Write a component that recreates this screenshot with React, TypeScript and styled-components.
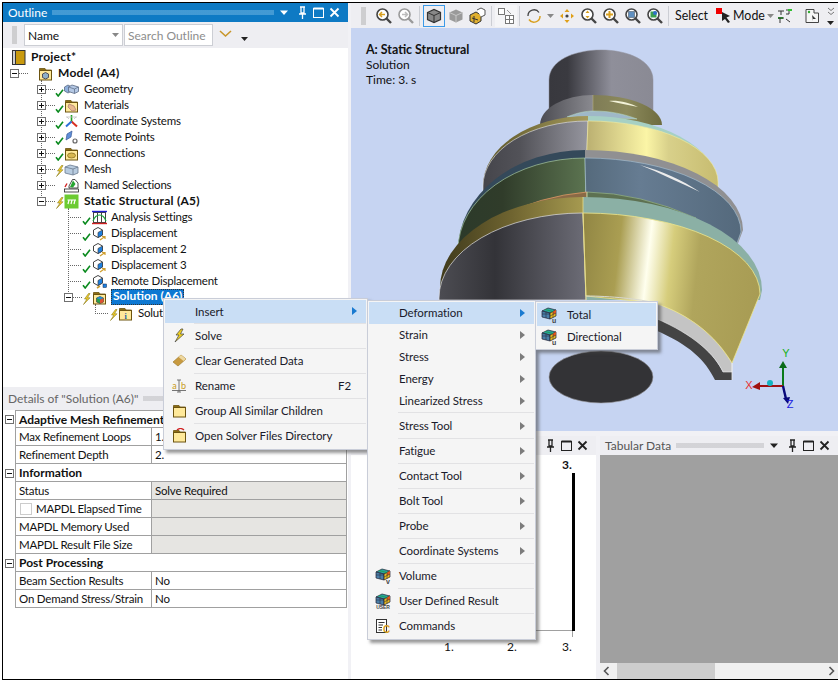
import React from "react";
import styled, { createGlobalStyle } from "styled-components";

const Global = createGlobalStyle`
  html, body { margin: 0; padding: 0; background: #fff; }
  #root { width: 840px; height: 682px; overflow: hidden; }
  * { box-sizing: border-box; }
`;

const FONT = `Lato, Roboto, "Liberation Sans", sans-serif`;

const Frame = styled.div`
  position: relative;
  margin: 2px 0 0 2px;
  width: 836px;
  height: 678px;
  border: 1px solid #000;
  border-right: 0;
  background: #f1f1f5;
  display: flex;
  gap: 3px;
  font: 12px ${FONT};
  color: #111;
  overflow: hidden;
`;
const LeftCol = styled.div`
  width: 345px;
  display: flex;
  flex-direction: column;
  background: #fff;
`;
const RightCol = styled.div`
  flex: 1;
  display: flex;
  flex-direction: column;
  min-width: 0;
`;
const TitleBar = styled.div<{ $active?: boolean }>`
  height: 19px;
  flex: none;
  display: flex;
  align-items: center;
  gap: 5px;
  padding: 0 7px 0 5px;
  background: ${(p) => (p.$active ? "#0e7ac4" : "#eeeef2")};
  color: ${(p) => (p.$active ? "#fff" : "#555")};
  font-size: 12px;
`;
const TitleDots = styled.div<{ $active?: boolean }>`
  flex: 1;
  height: 5px;
  background-image: radial-gradient(circle at center, ${(p) => (p.$active ? "#7fbde6" : "#b4b4b8")} 0.6px, transparent 0.8px);
  background-size: 2px 2px;
`;
const PanelBtns = styled.div`
  display: flex;
  align-items: center;
  gap: 3px;
  flex: none;
`;
const DropTri = styled.span`
  margin-right: 4px;
  display: flex;
`;
const OutlineBar = styled.div`
  height: 26px;
  flex: none;
  background: #eeeef2;
  display: flex;
  align-items: center;
  padding-left: 9px;
`;
const Grip = styled.div`
  width: 5px;
  height: 18px;
  flex: none;
  background-image: radial-gradient(circle at center, #a8a8a8 0.6px, transparent 0.8px);
  background-size: 2px 2px;
`;
const Combo = styled.div<{ $w: number; $ml?: number; $muted?: boolean }>`
  width: ${(p) => p.$w}px;
  height: 22px;
  flex: none;
  background: #fff;
  border: 1px solid #ccced4;
  display: flex;
  align-items: center;
  padding: 0 3px;
  margin: 0 1px 0 ${(p) => p.$ml ?? 0}px;
  color: ${(p) => (p.$muted ? "#8d8d8d" : "#111")};
  justify-content: space-between;
`;
const Nudge = styled.span<{ $l: number; $t: number }>`
  margin-left: ${(p) => p.$l}px;
  margin-top: ${(p) => p.$t}px;
  display: flex;
`;
const Tree = styled.div`
  flex: 1;
  padding-top: 1px;
  background: #fff;
`;
const dotted = "repeating-linear-gradient(to bottom, #666 0 1px, transparent 1px 2px)";
type Guide = [number, "full" | "top" | "bottom"];
const guideBg = (g?: Guide[]) =>
  g && g.length
    ? `background-image: ${g.map(() => dotted).join(",")};
       background-repeat: no-repeat;
       background-size: ${g.map((x) => `1px ${x[1] === "full" ? 16 : x[1] === "top" ? 8 : 3}px`).join(",")};
       background-position: ${g.map((x) => `${x[0]}px ${x[1] === "bottom" ? 13 : 0}px`).join(",")};`
    : "";
const Row = styled.div<{ $pad: number; $guides?: Guide[] }>`
  height: 16px;
  display: flex;
  align-items: center;
  padding-left: ${(p) => p.$pad}px;
  ${(p) => guideBg(p.$guides)}
`;
const Expander = styled.div`
  width: 9px;
  height: 9px;
  flex: none;
  border: 1px solid #707070;
  background: #fff;
  position: relative;
  &::before {
    content: "";
    position: absolute;
    left: 1px;
    right: 1px;
    top: 3px;
    height: 1px;
    background: #111;
  }
`;
const PlusExpander = styled(Expander)`
  &::after {
    content: "";
    position: absolute;
    top: 1px;
    bottom: 1px;
    left: 3px;
    width: 1px;
    background: #111;
  }
`;
const HDots = styled.div<{ $w: number }>`
  width: ${(p) => p.$w}px;
  height: 1px;
  flex: none;
  background-image: repeating-linear-gradient(to right, #666 0 1px, transparent 1px 2px);
`;
const Slot = styled.div`
  width: 9px;
  height: 16px;
  flex: none;
  display: flex;
  align-items: center;
  justify-content: center;
`;
const IconSlot = styled.div<{ $ml?: number }>`
  width: 15px;
  height: 16px;
  flex: none;
  margin-left: ${(p) => p.$ml ?? 0}px;
  display: flex;
  align-items: center;
  justify-content: center;
`;
const Label = styled.span<{ $bold?: boolean; $ml?: number }>`
  margin-left: ${(p) => p.$ml ?? 5}px;
  padding-bottom: 2px;
  font-size: ${(p) => (p.$bold ? 12 : 11.5)}px;
  letter-spacing: ${(p) => (p.$bold ? 0.25 : -0.2)}px;
  font-weight: ${(p) => (p.$bold ? 700 : 400)};
  white-space: nowrap;
`;
const SelLabel = styled.span`
  margin-left: 4px;
  background: #0d78d2;
  color: #fff;
  outline: 1px dotted #333;
  outline-offset: -1px;
  height: 16px;
  line-height: 14px;
  padding: 0 2px;
  font-weight: 700;
  white-space: nowrap;
`;
const DetailsHeader = styled.div`
  height: 23px;
  flex: none;
  display: flex;
  align-items: center;
  gap: 5px;
  padding: 3px 7px 3px 5px;
  background: #eeeef2;
  color: #666;
`;
const DetailsBody = styled.div`
  height: 269px;
  flex: none;
  background: #fff;
  display: grid;
  grid-template-columns: 12px 137px 195px;
  grid-auto-rows: 18px;
  align-content: start;
`;
const ExpCell = styled.div`
  display: flex;
  align-items: center;
  justify-content: center;
`;
const Section = styled.div<{ $first?: boolean }>`
  grid-column: 2 / 4;
  border: 1px solid #a0a0a0;
  border-top-width: ${(p) => (p.$first ? 1 : 0)}px;
  font-weight: 700;
  padding-left: 3px;
  line-height: 17px;
  white-space: nowrap;
`;
const Cell = styled.div<{ $col: 2 | 3; $ro?: boolean }>`
  grid-column: ${(p) => p.$col};
  border-right: 1px solid #a0a0a0;
  border-bottom: 1px solid #a0a0a0;
  border-left: ${(p) => (p.$col === 2 ? "1px solid #a0a0a0" : "0")};
  background: ${(p) => (p.$ro ? "#e6e5e2" : "#fff")};
  padding-left: 3px;
  font-size: 11.5px;
  letter-spacing: -0.2px;
  line-height: 16px;
  white-space: nowrap;
  overflow: hidden;
  display: flex;
  align-items: center;
`;
const Check = styled.span`
  width: 12px;
  height: 12px;
  border: 1px solid #ccc;
  background: #fff;
  margin: 0 4px 0 1px;
  flex: none;
`;
const Toolbar = styled.div`
  height: 25px;
  flex: none;
  background: #eeeef2;
  display: flex;
  align-items: center;
  padding-left: 10px;
`;
const ToolBtn = styled.div<{ $w?: number; $ml?: number; $on?: boolean; $soft?: boolean }>`
  width: ${(p) => p.$w ?? 22}px;
  height: 22px;
  flex: none;
  margin-left: ${(p) => p.$ml ?? 0}px;
  display: flex;
  align-items: center;
  justify-content: center;
  border: ${(p) => (p.$on ? "1px solid #3c9ae8" : "0")};
  background: ${(p) => (p.$soft ? "#f5f5f7" : "transparent")};
`;
const ToolSep = styled.div<{ $l: number; $r: number }>`
  width: 1px;
  height: 20px;
  flex: none;
  margin: 0 ${(p) => p.$r}px 0 ${(p) => p.$l}px;
  background: #ccced4;
`;
const ToolText = styled.span<{ $ml?: number }>`
  font-size: 12.4px;
  margin-left: ${(p) => p.$ml ?? 0}px;
  white-space: nowrap;
`;
const OverflowStack = styled.span`
  margin-left: 4px;
  display: flex;
  flex-direction: column;
  align-items: center;
  gap: 5px;
`;
const Viewport = styled.div`
  position: relative;
  height: 403px;
  flex: none;
  background: #c6d4f2;
`;
const Scene = styled.svg`
  display: block;
  width: 100%;
  height: 100%;
`;
const Caption = styled.div`
  position: absolute;
  left: 15px;
  top: 14px;
  line-height: 15px;
  color: #111;
`;
const CaptionTitle = styled.div`
  font-weight: 700;
  font-size: 12.4px;
`;
const BottomRow = styled.div`
  flex: 1;
  margin-top: 5px;
  display: flex;
  gap: 4px;
  min-height: 0;
`;
const GraphPanel = styled.div`
  width: 245px;
  flex: none;
  display: flex;
  flex-direction: column;
  background: #fff;
`;
const GraphBody = styled.svg`
  flex: 1;
  display: block;
  width: 100%;
  min-height: 0;
`;
const TabularPanel = styled.div`
  flex: 1;
  display: flex;
  flex-direction: column;
  min-width: 0;
`;
const TabularBody = styled.div`
  flex: 1;
  background: #a0a0a0;
`;
const ScrollBar = styled.div`
  height: 16px;
  flex: none;
  background: #f0f0f0;
  display: flex;
  align-items: center;
  padding: 0 3px;
  justify-content: space-between;
`;
const Thumb = styled.div`
  width: 98px;
  height: 16px;
  background: #cdcdcd;
  margin-left: 7px;
  margin-right: auto;
`;
const Menu = styled.div<{ $x: number; $y: number; $w: number }>`
  position: absolute;
  left: ${(p) => p.$x}px;
  top: ${(p) => p.$y}px;
  width: ${(p) => p.$w}px;
  background: #f5f5f5;
  border: 1px solid #c9cdd8;
  box-shadow: 3px 3px 3px rgba(70, 70, 70, 0.55);
  padding: 1px;
  font-size: 11.5px;
  letter-spacing: -0.05px;
  color: #1a1a2a;
`;
const MenuItem = styled.div<{ $h: number; $sep?: boolean; $on?: boolean; $tx: number; $pt?: number; $pb?: number }>`
  position: relative;
  height: ${(p) => p.$h}px;
  display: flex;
  align-items: center;
  padding: ${(p) => p.$pt ?? 0}px 9px ${(p) => p.$pb ?? 0}px ${(p) => p.$tx}px;
  background: ${(p) => (p.$on ? "#c9def5" : "transparent")};
  &::before {
    content: ${(p) => (p.$sep ? '""' : "none")};
    position: absolute;
    left: ${(p) => p.$tx - 1}px;
    right: 0;
    top: 0;
    height: 1px;
    background: #e2e2e4;
  }
`;
const MenuIcon = styled.span<{ $l?: number }>`
  position: absolute;
  left: ${(p) => p.$l ?? 3}px;
  top: 0;
  bottom: 0;
  width: 22px;
  display: flex;
  align-items: center;
  justify-content: center;
`;
const Shortcut = styled.span`
  margin-left: auto;
  margin-right: 6px;
`;
const Arrow = styled.span<{ $on?: boolean }>`
  margin-left: auto;
  width: 0;
  height: 0;
  border-left: 5px solid ${(p) => (p.$on ? "#1a7ad0" : "#7c7c7c")};
  border-top: 4px solid transparent;
  border-bottom: 4px solid transparent;
`;

/* ---------- icons ---------- */
const S = (p: { w?: number; h?: number; children: React.ReactNode }) => (
  <svg width={p.w ?? 15} height={p.h ?? 15} viewBox={`0 0 ${p.w ?? 15} ${p.h ?? 15}`} style={{ display: "block", flex: "none" }}>
    {p.children}
  </svg>
);
const CheckMark = () => (
  <S w={9} h={16}>
    <path d="M1 12.3L3.2 15L8 8.8" fill="none" stroke="#0a8a1e" strokeWidth="1.6" />
  </S>
);
const Bolt = () => (
  <S w={9} h={16}>
    <path d="M6.5 4.5L2.5 10H5L1.5 15.5L8 8.8H5.5L8 4.5Z" fill="#f2cf2a" stroke="#8a7a1c" strokeWidth="0.6" />
  </S>
);
const FolderBase = (p: { children?: React.ReactNode }) => (
  <S>
    <path d="M1.5 2.5H7L8 4H13.5V5H1.5Z" fill="#8c6d14" stroke="#6c5410" strokeWidth="0.8" />
    <rect x="1.5" y="4.5" width="12" height="9.5" fill="#ffe99a" stroke="#6c5410" />
    {p.children}
  </S>
);
const BoxCluster = () => (
  <S>
    <path d="M0.5 5L4 3L7.5 5V9L4 11L0.5 9Z" fill="#8fb0dc" stroke="#5a6a84" strokeWidth="0.8" />
    <path d="M4.5 5L8 3L14.5 5V9.5L10.5 11.5L4.5 9.5Z" fill="#b4c8e4" stroke="#5a6a84" strokeWidth="0.8" />
    <path d="M4.5 5L10.5 7V11.5M10.5 7L14.5 5" fill="none" stroke="#5a6a84" strokeWidth="0.7" />
  </S>
);
const ProjectIcon = () => (
  <S>
    <rect x="1.5" y="0.5" width="3" height="14" fill="#cfcfcf" stroke="#333" />
    <rect x="4.5" y="0.5" width="9.5" height="14" fill="#c99a0e" stroke="#333" />
  </S>
);
const ModelIcon = () => (
  <FolderBase>
    <path d="M4.5 8L7.5 6.5L10.5 8V11.5L7.5 13L4.5 11.5Z" fill="#8fb0c8" stroke="#334" strokeWidth="0.8" />
  </FolderBase>
);
const MaterialsIcon = () => (
  <FolderBase>
    <path d="M5 6L10 8L12 12L8 13L4 9Z" fill="#e8b98e" stroke="#a77" strokeWidth="0.7" />
  </FolderBase>
);
const ConnectionsIcon = () => (
  <FolderBase>
    <ellipse cx="7.5" cy="9.5" rx="4" ry="2.5" fill="#d8b850" stroke="#8a6e20" strokeWidth="0.8" />
  </FolderBase>
);
const CoordIcon = () => (
  <S>
    <path d="M7.5 7.5V1" stroke="#1da01d" strokeWidth="1.6" />
    <path d="M7.5 7.5L13 12.5" stroke="#d83020" strokeWidth="2" />
    <path d="M7.5 7.5L2 12.5" stroke="#2d6fd8" strokeWidth="2" />
    <path d="M2 3L13 3M5 5L3 3M10 5L12 3" stroke="#c0c0c0" strokeWidth="0.8" />
  </S>
);
const RemoteIcon = () => (
  <S>
    <path d="M2 10L3 4L8 1L7 7Z" fill="#5f8fd8" stroke="#3a5a9a" strokeWidth="0.7" />
    <circle cx="11" cy="11" r="2" fill="none" stroke="#666" strokeWidth="1.2" />
  </S>
);
const MeshIcon = () => (
  <S>
    <path d="M1 5L6 3L14 5V11L9 13L1 11Z" fill="#b8cce0" stroke="#6a7a8e" strokeWidth="0.8" />
    <path d="M1 5L9 7V13M9 7L14 5" fill="none" stroke="#6a7a8e" strokeWidth="0.8" />
  </S>
);
const NamedIcon = () => (
  <S>
    <rect x="0.5" y="11" width="14" height="3" fill="#fff" stroke="#222" strokeWidth="0.8" />
    <path d="M5 8L8.5 1.5H11L14 5V10H5Z" fill="#fff" stroke="#222" strokeWidth="0.8" />
    <path d="M6 9L9 2.5L11.5 6L9 9.5Z" fill="#27a531" />
    <path d="M1 9L3 5.5" stroke="#d02020" strokeWidth="1.4" />
  </S>
);
const StaticIcon = () => (
  <S>
    <rect x="0.5" y="0.5" width="14" height="14" fill="#6ccb32" />
    <path d="M3.5 6H12M5 6L4 10M8 6L7 10M11 6L10 10" stroke="#fff" strokeWidth="1.2" fill="none" />
  </S>
);
const AnalysisIcon = () => (
  <S>
    <rect x="1.5" y="2.5" width="12" height="10" fill="#fff" stroke="#444" />
    <path d="M5.5 2.5V12.5M9.5 2.5V12.5" stroke="#444" />
    <path d="M0 1.5H15" stroke="#2020d0" strokeWidth="1.4" />
    <path d="M0 13.5H15" stroke="#d02020" strokeWidth="1.4" />
    <path d="M1 11C4 3 11 3 14 11" fill="none" stroke="#15a83a" strokeWidth="1.2" />
  </S>
);
const DispIcon = (p: { remote?: boolean }) => (
  <S>
    <path d="M1.5 4L6 1.5L10.5 4V9L6 11.5L1.5 9Z" fill="#fff" stroke="#444" />
    <path d="M6 6.5L10.5 4V9L6 11.5Z" fill="#1b7fe0" stroke="#444" strokeWidth="0.7" />
    {p.remote ? (
      <>
        <rect x="11" y="10" width="3.5" height="3.5" fill="#1b7fe0" stroke="#124" strokeWidth="0.5" />
        <path d="M5 14L8 12" stroke="#c99a2e" strokeWidth="1.6" />
      </>
    ) : (
      <path d="M8 14L13 10.5M10 10.5H13V13" stroke="#cf9f30" strokeWidth="1.2" fill="none" />
    )}
  </S>
);
const SolutionIcon = () => (
  <FolderBase>
    <path d="M4.5 8L8 6.5L11.5 8V12L8 13.5L4.5 12Z" fill="#28a048" stroke="#334" strokeWidth="0.6" />
    <path d="M8 9.5L11.5 8V12L8 13.5Z" fill="#e05030" />
    <path d="M4.5 8L8 6.5L11.5 8L8 9.5Z" fill="#2a8ad0" />
  </FolderBase>
);
const InfoIcon = () => (
  <FolderBase>
    <text x="7.5" y="12.5" fontSize="8" textAnchor="middle" fill="#2060a0" fontWeight="700" fontFamily="Liberation Serif">i</text>
  </FolderBase>
);
const ChevronGold = () => (
  <S w={13} h={8}>
    <path d="M1 1L6.5 6L12 1" fill="none" stroke="#c8962a" strokeWidth="1.6" />
  </S>
);
const Tri = (p: { c?: string; w?: number; h?: number }) => (
  <S w={p.w ?? 7} h={p.h ?? 4}>
    <path d={`M0 0H${p.w ?? 7}L${(p.w ?? 7) / 2} ${p.h ?? 4}Z`} fill={p.c ?? "#222"} />
  </S>
);
const PanelTools = (p: { c: string }) => (
  <PanelBtns>
    <DropTri><S w={10} h={6}><path d="M1 0.5H9L5 5Z" fill={p.c} /></S></DropTri>
    <S w={13} h={14}>
      <path d="M4 1H9M5 1.5V7H8V1.5M3 8H10M6.5 8V13" fill="none" stroke={p.c} strokeWidth="1.3" />
    </S>
    <S w={13} h={13}>
      <rect x="1.5" y="2.5" width="10" height="9" fill="none" stroke={p.c} />
      <path d="M1.5 2.5H11.5" stroke={p.c} strokeWidth="2" />
    </S>
    <S w={13} h={13}>
      <path d="M2.5 2.5L10.5 10.5M10.5 2.5L2.5 10.5" stroke={p.c} strokeWidth="1.8" />
    </S>
  </PanelBtns>
);
const Mag = (p: { glyph?: React.ReactNode; muted?: boolean }) => (
  <S w={18} h={18}>
    <circle cx="7.5" cy="7.5" r="5.5" fill="#fff" stroke={p.muted ? "#9a9a9a" : "#444"} strokeWidth="1.6" />
    <path d="M11.5 11.5L16 16" stroke={p.muted ? "#9a9a9a" : "#444"} strokeWidth="2.4" />
    {p.glyph}
  </S>
);
const CubeTool = (p: { fill?: string; flat?: boolean }) => (
  <S w={16} h={16}>
    <path d="M1.5 4.5L8 1.5L14.5 4.5V11.5L8 14.5L1.5 11.5Z" fill={p.fill ?? "#888"} stroke={p.flat ? "none" : "#333"} strokeWidth="1.2" />
    <path d="M1.5 4.5L8 7.5L14.5 4.5" fill="none" stroke={p.flat ? "#c8c8c8" : "#333"} strokeWidth="1" />
    <path d="M8 7.5V14.5" stroke={p.flat ? "#c8c8c8" : "#333"} strokeWidth="1" />
  </S>
);
const RainbowCube = (p: { sub?: string; subSize?: number; subX?: number }) => (
  <S w={17} h={16}>
    <path d="M1 4L7 1L15 3L9 6Z" fill="#2aa6a0" stroke="#223" strokeWidth="0.7" />
    <path d="M1 4L9 6V12L1 10Z" fill="#4a7fa8" stroke="#223" strokeWidth="0.7" />
    <path d="M9 6L15 3V9L9 12Z" fill="#e8bc20" stroke="#223" strokeWidth="0.7" />
    <path d="M12 4.5L15 3V6L12 7.5Z" fill="#e2571f" />
    <path d="M1 7H9M5 5V11M9 9L15 6M12 4.5V10.5" fill="none" stroke="#223" strokeWidth="0.5" />
    <path d="M4 2.5L12 4.5" stroke="#1a9a4a" strokeWidth="0.8" />
    {p.sub ? (
      <text x={p.subX ?? 13} y="15.5" fontSize={p.subSize ?? 7} textAnchor="middle" fontWeight="700" fill="#444" fontFamily="Liberation Sans">{p.sub}</text>
    ) : null}
  </S>
);

/* ---------- menus data ---------- */
const menu2: { t: string; h: number; pt?: number; pb?: number; sep?: boolean; arrow?: boolean; on?: boolean; icon?: React.ReactNode }[] = [
  { t: "Deformation", h: 22, pb: 1, arrow: true, on: true },
  { t: "Strain", h: 22, pb: 1, arrow: true },
  { t: "Stress", h: 22, pb: 1, arrow: true },
  { t: "Energy", h: 22, pb: 1, arrow: true },
  { t: "Linearized Stress", h: 22, pb: 1, arrow: true },
  { t: "Stress Tool", h: 26, pt: 1, sep: true, arrow: true },
  { t: "Fatigue", h: 25, sep: true, arrow: true },
  { t: "Contact Tool", h: 25, sep: true, arrow: true },
  { t: "Bolt Tool", h: 25, sep: true, arrow: true },
  { t: "Probe", h: 25, sep: true, arrow: true },
  { t: "Coordinate Systems", h: 25, sep: true, arrow: true },
  { t: "Volume", h: 25, sep: true, icon: <RainbowCube sub="v" /> },
  { t: "User Defined Result", h: 25, sep: true, icon: <RainbowCube sub="USER" subSize={5} subX={8} /> },
  {
    t: "Commands",
    h: 25,
    sep: true,
    icon: (
      <S w={16} h={16}>
        <rect x="1.5" y="1.5" width="10" height="13" fill="#fff" stroke="#333" />
        <path d="M3.5 4.5H9.5M3.5 7H8M3.5 9.5H7M3.5 12H7" stroke="#333" />
        <text x="11.5" y="15" fontSize="10" textAnchor="middle" fill="#d8a020" fontFamily="Liberation Sans" fontWeight="700">C</text>
      </S>
    ),
  },
];

const bolt = <Bolt />;
const chk = <CheckMark />;

/* quarter-ellipse pieces of a shoulder outline: left foot -> crown -> right foot */
const up = (xl: number, yl: number, xt: number, yt: number) => `A${xt - xl} ${yl - yt} 0 0 1 ${xt} ${yt}`;
const down = (xt: number, yt: number, xr: number, yr: number) => `A${xr - xt} ${yr - yt} 0 0 1 ${xr} ${yr}`;

const Scene3D = () => (
  <Scene viewBox="351 28 487 403">
    <defs>
      <linearGradient id="cyl" gradientUnits="userSpaceOnUse" x1="549" y1="0" x2="653" y2="0">
        <stop offset="0" stopColor="#38383e" /><stop offset="0.18" stopColor="#3a3a40" /><stop offset="0.6" stopColor="#8f8f9a" /><stop offset="1" stopColor="#8a8a94" />
      </linearGradient>
      <linearGradient id="neckL" gradientUnits="userSpaceOnUse" x1="540" y1="0" x2="593" y2="0">
        <stop offset="0" stopColor="#4c4c52" /><stop offset="1" stopColor="#8a8a90" />
      </linearGradient>
      <linearGradient id="neckR" gradientUnits="userSpaceOnUse" x1="593" y1="0" x2="660" y2="0">
        <stop offset="0" stopColor="#7f7c56" /><stop offset="0.5" stopColor="#8c8a5c" /><stop offset="1" stopColor="#6f6d40" />
      </linearGradient>
      <linearGradient id="l3L" gradientUnits="userSpaceOnUse" x1="483" y1="0" x2="588" y2="0">
        <stop offset="0" stopColor="#45454b" /><stop offset="0.35" stopColor="#525258" /><stop offset="1" stopColor="#96969f" />
      </linearGradient>
      <linearGradient id="l3R" gradientUnits="userSpaceOnUse" x1="588" y1="0" x2="718" y2="0">
        <stop offset="0" stopColor="#bcb172" /><stop offset="0.45" stopColor="#fbf5a6" /><stop offset="0.62" stopColor="#d8d08a" /><stop offset="1" stopColor="#c7bc70" />
      </linearGradient>
      <linearGradient id="rimL" gradientUnits="userSpaceOnUse" x1="483" y1="0" x2="588" y2="0">
        <stop offset="0" stopColor="#5a5428" /><stop offset="1" stopColor="#a59a5c" />
      </linearGradient>
      <linearGradient id="l4G" gradientUnits="userSpaceOnUse" x1="458" y1="0" x2="585" y2="0">
        <stop offset="0" stopColor="#2c3a2a" /><stop offset="0.35" stopColor="#303c2a" /><stop offset="1" stopColor="#5b7350" />
      </linearGradient>
      <linearGradient id="l4B" gradientUnits="userSpaceOnUse" x1="585" y1="0" x2="742" y2="0">
        <stop offset="0" stopColor="#556a7c" /><stop offset="0.35" stopColor="#667c92" /><stop offset="1" stopColor="#54697c" />
      </linearGradient>
      <linearGradient id="l5L" gradientUnits="userSpaceOnUse" x1="440" y1="0" x2="583" y2="0">
        <stop offset="0" stopColor="#3f3a1c" /><stop offset="0.5" stopColor="#6f6430" /><stop offset="1" stopColor="#a69a50" />
      </linearGradient>
      <linearGradient id="bodyL" gradientUnits="userSpaceOnUse" x1="440" y1="0" x2="585" y2="0">
        <stop offset="0" stopColor="#4c4c52" /><stop offset="0.38" stopColor="#333338" /><stop offset="1" stopColor="#6c6c76" />
      </linearGradient>
      <linearGradient id="bodyR" gradientUnits="userSpaceOnUse" x1="585" y1="230" x2="762" y2="250">
        <stop offset="0" stopColor="#938845" /><stop offset="0.2" stopColor="#aa9e52" /><stop offset="0.37" stopColor="#ffffee" /><stop offset="0.5" stopColor="#d6cd7c" /><stop offset="0.65" stopColor="#b0a55c" /><stop offset="1" stopColor="#a89c54" />
      </linearGradient>
    </defs>
    {/* bore */}
    <ellipse cx="601" cy="377" rx="52" ry="26" fill="#333336" stroke="#9a9aa0" strokeWidth="0.6" />
    {/* cut ring */}
    <path d="M655 316C695 333 715 355 723 372H732V380H715C705 360 690 345 655 330Z" fill="#444" />
    <path d="M655 303C690 314 715 335 732 363V372H723C715 355 695 335 655 318Z" fill="#c4c4c4" stroke="#eee" strokeWidth="0.6" />
    <path d="M732 363V380" stroke="#eee" strokeWidth="0.8" />
    {/* top cylinder */}
    <path d="M549 80C549 60 575 50 601 50C627 50 653 60 653 80V125H549Z" fill="url(#cyl)" stroke="#8f8f98" strokeWidth="0.5" />
    {/* neck */}
    <path d={`M540 125${up(540, 125, 593, 95)}V125Z`} fill="url(#neckL)" />
    <path d={`M593 95${down(593, 95, 662, 125)}H593Z`} fill="url(#neckR)" />
    <path d="M609 101C618 100 630 103 638 107C628 105 618 103 609 101Z" fill="#f2f2d8" />
    <path d="M593 95V111" stroke="#b5b07a" strokeWidth="0.6" />
    <path d="M567 117C576 113 586 111 594 111C610 111 624 114 637 119Z" fill="#9fb8c8" stroke="#b9dcc0" strokeWidth="0.5" />
    {/* layer 3 */}
    <path d={`M483 186${up(483, 186, 588, 116)}V200H483Z`} fill="url(#rimL)" />
    <path d={`M588 116${down(588, 116, 718, 186)}V200H588Z`} fill="#a6d0c4" />
    <path d={`M483 186${up(483, 186, 588, 121)}L585 200H483Z`} fill="url(#l3L)" stroke="#e8e8ec" strokeWidth="0.6" />
    <path d={`M588 121${down(588, 121, 718, 182)}V200H585Z`} fill="url(#l3R)" stroke="#f4eda0" strokeWidth="0.6" />
    {/* layer 4 */}
    <path d={`M458 250${up(458, 250, 585, 150)}V262H458Z`} fill="#34495a" />
    <path d={`M585 150${down(585, 150, 743, 230)}L737 246H585Z`} fill="#909092" />
    <path d={`M458 250${up(458, 250, 585, 158)}L587 262H458Z`} fill="url(#l4G)" stroke="#b8dcb0" strokeWidth="0.6" />
    <path d={`M585 158${down(585, 158, 741, 232)}L736 246H587Z`} fill="url(#l4B)" stroke="#a8c4d8" strokeWidth="0.6" />
    <path d="M640 165C662 171 682 180 700 192C680 183 660 173 640 165Z" fill="#ececec" />
    {/* groove */}
    <path d="M500 217Q540 196 587 192V220H500Z" fill="#8a6a46" stroke="#eaa06a" strokeWidth="0.7" />
    <path d="M587 192Q640 193 696 218L587 220Z" fill="#5d7152" stroke="#9fc090" strokeWidth="0.6" />
    <path d="M587 192V199" stroke="#c8d8a8" strokeWidth="0.7" />
    {/* layer 5 */}
    <path d={`M440 288${up(440, 288, 583, 197)}V300H440Z`} fill="url(#l5L)" />
    <path d={`M583 197${down(583, 197, 762, 290)}L760 300H583Z`} fill="#8bb0a5" />
    {/* main body */}
    <path d={`M439 298${up(439, 298, 583, 213)}L586 300H439Z`} fill="url(#bodyL)" stroke="#dcdce2" strokeWidth="0.7" />
    <path d={`M583 213${down(583, 213, 760, 294)}L732 363C715 335 690 315 655 303L586 296Z`} fill="url(#bodyR)" stroke="#efe68a" strokeWidth="0.8" />
    <path d="M586 296C610 296 640 299 655 303" fill="none" stroke="#d9d9d0" strokeWidth="1" />
    <path d="M583 197V213M583 213L586 300" stroke="#e8dd88" strokeWidth="0.8" />
    {/* triad */}
    <path d="M783 386V364" stroke="#0a7a1a" strokeWidth="2" />
    <path d="M779 368L783 361L787 368Z" fill="#0a6a18" />
    <path d="M783 386H758" stroke="#a01010" strokeWidth="2" />
    <path d="M760 382L752 387L760 390Z" fill="#a01010" />
    <path d="M783 386L786 399" stroke="#08087a" strokeWidth="2.4" />
    <path d="M783 398L790 397L788 404Z" fill="#08087a" />
    <circle cx="770" cy="383" r="3" fill="#14b4c0" />
    <text x="786" y="357" fontSize="11" textAnchor="middle" fill="#16b016" fontFamily="Liberation Sans">Y</text>
    <text x="749" y="389" fontSize="11" textAnchor="middle" fill="#e83030" fontFamily="Liberation Sans">X</text>
    <text x="790" y="408" fontSize="11" textAnchor="middle" fill="#2020e0" fontFamily="Liberation Sans">Z</text>
  </Scene>
);

export default function App() {
  return (
    <>
      <Global />
      <Frame>
        <LeftCol>
          <TitleBar $active>
            Outline
            <TitleDots $active />
            <PanelTools c="#fff" />
          </TitleBar>
          <OutlineBar>
            <Grip />
            <Combo $w={99} $ml={7}>Name<Tri c="#888" /></Combo>
            <Combo $w={89} $muted>Search Outline</Combo>
            <Nudge $l={5} $t={-2}><ChevronGold /></Nudge>
            <Nudge $l={9} $t={8}><Tri /></Nudge>
          </OutlineBar>
          <Tree>
            <Row $pad={8}><IconSlot><ProjectIcon /></IconSlot><Label $bold>Project*</Label></Row>
            <Row $pad={7} $guides={[[38, "bottom"]]}><Expander /><HDots $w={10} /><Slot /><IconSlot><ModelIcon /></IconSlot><Label $bold>Model (A4)</Label></Row>
            <Row $pad={34} $guides={[[38, "full"]]}><PlusExpander /><HDots $w={9} /><Slot>{chk}</Slot><IconSlot><BoxCluster /></IconSlot><Label>Geometry</Label></Row>
            <Row $pad={34} $guides={[[38, "full"]]}><PlusExpander /><HDots $w={9} /><Slot>{chk}</Slot><IconSlot><MaterialsIcon /></IconSlot><Label>Materials</Label></Row>
            <Row $pad={34} $guides={[[38, "full"]]}><PlusExpander /><HDots $w={9} /><Slot>{chk}</Slot><IconSlot><CoordIcon /></IconSlot><Label>Coordinate Systems</Label></Row>
            <Row $pad={34} $guides={[[38, "full"]]}><PlusExpander /><HDots $w={9} /><Slot>{chk}</Slot><IconSlot><RemoteIcon /></IconSlot><Label>Remote Points</Label></Row>
            <Row $pad={34} $guides={[[38, "full"]]}><PlusExpander /><HDots $w={9} /><Slot>{chk}</Slot><IconSlot><ConnectionsIcon /></IconSlot><Label>Connections</Label></Row>
            <Row $pad={34} $guides={[[38, "full"]]}><PlusExpander /><HDots $w={9} /><Slot>{bolt}</Slot><IconSlot><MeshIcon /></IconSlot><Label>Mesh</Label></Row>
            <Row $pad={34} $guides={[[38, "full"]]}><PlusExpander /><HDots $w={9} /><Slot /><IconSlot><NamedIcon /></IconSlot><Label>Named Selections</Label></Row>
            <Row $pad={34} $guides={[[38, "top"], [65, "bottom"]]}><Expander /><HDots $w={9} /><Slot>{bolt}</Slot><IconSlot><StaticIcon /></IconSlot><Label $bold>Static Structural (A5)</Label></Row>
            <Row $pad={65} $guides={[[65, "full"]]}><HDots $w={14} /><Slot>{chk}</Slot><IconSlot $ml={1}><AnalysisIcon /></IconSlot><Label $ml={4}>Analysis Settings</Label></Row>
            <Row $pad={65} $guides={[[65, "full"]]}><HDots $w={14} /><Slot>{chk}</Slot><IconSlot $ml={1}><DispIcon /></IconSlot><Label $ml={4}>Displacement</Label></Row>
            <Row $pad={65} $guides={[[65, "full"]]}><HDots $w={14} /><Slot>{chk}</Slot><IconSlot $ml={1}><DispIcon /></IconSlot><Label $ml={4}>Displacement 2</Label></Row>
            <Row $pad={65} $guides={[[65, "full"]]}><HDots $w={14} /><Slot>{chk}</Slot><IconSlot $ml={1}><DispIcon /></IconSlot><Label $ml={4}>Displacement 3</Label></Row>
            <Row $pad={65} $guides={[[65, "full"]]}><HDots $w={14} /><Slot>{chk}</Slot><IconSlot $ml={1}><DispIcon remote /></IconSlot><Label $ml={4}>Remote Displacement</Label></Row>
            <Row $pad={61} $guides={[[65, "top"], [92, "bottom"]]}><Expander /><HDots $w={9} /><Slot>{bolt}</Slot><IconSlot $ml={1}><SolutionIcon /></IconSlot><SelLabel>Solution (A6)</SelLabel></Row>
            <Row $pad={92} $guides={[[92, "top"]]}><HDots $w={14} /><Slot>{bolt}</Slot><IconSlot><InfoIcon /></IconSlot><Label>Solution Information</Label></Row>
          </Tree>
          <DetailsHeader>
            Details of "Solution (A6)"
            <TitleDots />
            <PanelTools c="#555" />
          </DetailsHeader>
          <DetailsBody>
            <ExpCell><Expander /></ExpCell><Section $first>Adaptive Mesh Refinement</Section>
            <Cell $col={2}>Max Refinement Loops</Cell><Cell $col={3}>1.</Cell>
            <Cell $col={2}>Refinement Depth</Cell><Cell $col={3}>2.</Cell>
            <ExpCell><Expander /></ExpCell><Section>Information</Section>
            <Cell $col={2}>Status</Cell><Cell $col={3} $ro>Solve Required</Cell>
            <Cell $col={2}><Check />MAPDL Elapsed Time</Cell><Cell $col={3} $ro />
            <Cell $col={2}>MAPDL Memory Used</Cell><Cell $col={3} $ro />
            <Cell $col={2}>MAPDL Result File Size</Cell><Cell $col={3} $ro />
            <ExpCell><Expander /></ExpCell><Section>Post Processing</Section>
            <Cell $col={2}>Beam Section Results</Cell><Cell $col={3}>No</Cell>
            <Cell $col={2}>On Demand Stress/Strain</Cell><Cell $col={3}>No</Cell>
          </DetailsBody>
        </LeftCol>
        <RightCol>
          <Toolbar>
            <Grip />
            <ToolBtn $ml={7}><Mag glyph={<path d="M10 7.5H5M7 5L4.5 7.5L7 10" fill="none" stroke="#d8a020" strokeWidth="1.5" />} /></ToolBtn>
            <ToolBtn><Mag muted glyph={<path d="M5 7.5H10M8 5L10.5 7.5L8 10" fill="none" stroke="#bbb" strokeWidth="1.5" />} /></ToolBtn>
            <ToolSep $l={2} $r={3} />
            <ToolBtn $on><CubeTool /></ToolBtn>
            <ToolBtn><CubeTool flat fill="#9a9a9a" /></ToolBtn>
            <ToolBtn>
              <S w={18} h={18}>
                <path d="M1 8L7 5L12 8V14L7 17L1 14Z" fill="#e0b030" stroke="#333" strokeWidth="1" />
                <path d="M8 3L12 1L16 3V8L12 10" fill="#fff" stroke="#555" strokeWidth="1" />
                <path d="M5 9V15M3 11L9 13" stroke="#333" />
              </S>
            </ToolBtn>
            <ToolSep $l={2} $r={3} />
            <ToolBtn $soft>
              <S w={18} h={18}>
                <rect x="1.5" y="1.5" width="6" height="6" fill="#fff" stroke="#777" />
                <rect x="8.5" y="8.5" width="8" height="8" fill="#fff" stroke="#777" />
                <path d="M12.5 8.5V16.5M8.5 12.5H16.5" stroke="#777" />
                <path d="M10 3L14 7" stroke="#999" />
              </S>
            </ToolBtn>
            <ToolSep $l={2} $r={3} />
            <ToolBtn>
              <S w={16} h={16}>
                <path d="M2 8A6 6 0 0 1 13 4.5" fill="none" stroke="#444" strokeWidth="1.3" />
                <path d="M14 8A6 6 0 0 1 3 11.5" fill="none" stroke="#d8a020" strokeWidth="1.5" />
              </S>
            </ToolBtn>
            <ToolBtn $w={11}><Tri c="#888" /></ToolBtn>
            <ToolBtn>
              <S w={16} h={16}>
                <circle cx="8" cy="8" r="1.6" fill="#444" />
                <path d="M8 1L5.5 4H10.5ZM8 15L5.5 12H10.5ZM1 8L4 5.5V10.5ZM15 8L12 5.5V10.5Z" fill="#e0a018" />
              </S>
            </ToolBtn>
            <ToolBtn><Mag glyph={<path d="M7.5 3.5L5.5 6H9.5ZM7.5 11.5L5.5 9H9.5Z" fill="#d8a020" />} /></ToolBtn>
            <ToolBtn><Mag glyph={<path d="M7.5 4V11M4 7.5H11" stroke="#d8a020" strokeWidth="2" />} /></ToolBtn>
            <ToolBtn><Mag glyph={<rect x="4.5" y="4.5" width="6" height="6" fill="#5f8fc0" stroke="#789" />} /></ToolBtn>
            <ToolBtn><Mag glyph={<><rect x="4.5" y="4.5" width="6" height="6" fill="#3aa050" /><circle cx="9" cy="6" r="2" fill="#3070c8" /></>} /></ToolBtn>
            <ToolSep $l={2} $r={6} />
            <ToolText>Select</ToolText>
            <Nudge $l={8} $t={0}>
              <S w={16} h={16}>
                <rect x="0" y="0" width="6" height="6" fill="#f00000" />
                <path d="M6 4L14 8L10.5 9.5L14 14L12 15L9 11L6 13Z" fill="#222" />
              </S>
            </Nudge>
            <ToolText $ml={1}>Mode</ToolText>
            <Nudge $l={2} $t={0}><Tri c="#888" /></Nudge>
            <ToolBtn>
              <S w={16} h={16}>
                <path d="M1 3H7M4 3V7M9 2H15M12 2V6H9" fill="none" stroke="#333" />
                <rect x="11" y="1" width="4" height="2" fill="#30c030" />
                <rect x="1" y="9" width="5" height="2" fill="#30c030" />
                <path d="M1 10H7M3 10V15M9 11L13 14" fill="none" stroke="#333" />
              </S>
            </ToolBtn>
            <ToolBtn $ml={5}>
              <S w={16} h={16}>
                <path d="M2 1.5H10V5H14.5V14.5H2Z" fill="#f6f6f6" stroke="#444" />
                <circle cx="5" cy="4" r="1.2" fill="#3a3" />
                <path d="M8 7L12 11H9V13Z" fill="#333" />
              </S>
            </ToolBtn>
            <OverflowStack>
              <S w={8} h={9}><path d="M1 1L4 3.5L7 1M1 5L4 7.5L7 5" fill="none" stroke="#777" /></S>
              <Tri />
            </OverflowStack>
          </Toolbar>
          <Viewport>
            <Scene3D />
            <Caption>
              <CaptionTitle>A: Static Structural</CaptionTitle>
              <div>Solution</div>
              <div>Time: 3. s</div>
            </Caption>
          </Viewport>
          <BottomRow>
            <GraphPanel>
              <TitleBar>
                Graph
                <TitleDots />
                <PanelTools c="#222" />
              </TitleBar>
              <GraphBody viewBox="351 455 245 224" preserveAspectRatio="none">
                <rect x="367" y="630" width="205" height="1" fill="#a0a0a0" />
                <rect x="572" y="473" width="3" height="158" fill="#000" />
                <rect x="572" y="631" width="1" height="6" fill="#a0a0a0" />
                <text x="567" y="469" fontSize="12" fontWeight="700" textAnchor="middle" fontFamily="Lato" fill="#111">3.</text>
                <text x="449" y="651" fontSize="12" textAnchor="middle" fontFamily="Lato" fill="#111">1.</text>
                <text x="512" y="651" fontSize="12" textAnchor="middle" fontFamily="Lato" fill="#111">2.</text>
                <text x="567" y="651" fontSize="12" textAnchor="middle" fontFamily="Lato" fill="#111">3.</text>
              </GraphBody>
            </GraphPanel>
            <TabularPanel>
              <TitleBar>
                Tabular Data
                <TitleDots />
                <PanelTools c="#222" />
              </TitleBar>
              <TabularBody />
              <ScrollBar>
                <S w={7} h={10}><path d="M5.5 1L1.5 5L5.5 9" fill="none" stroke="#555" strokeWidth="1.6" /></S>
                <Thumb />
                <S w={7} h={10}><path d="M1.5 1L5.5 5L1.5 9" fill="none" stroke="#555" strokeWidth="1.6" /></S>
              </ScrollBar>
            </TabularPanel>
          </BottomRow>
        </RightCol>
        <Menu $x={160} $y={295} $w={205}>
          <MenuItem $h={23} $on $pb={1} $tx={30}>Insert<Arrow $on /></MenuItem>
          <MenuItem $h={25} $sep $tx={30}>
            <MenuIcon><S><path d="M9 1L4 7H7L3 14L12 6H8.5L11 1Z" fill="#f0d020" stroke="#444" strokeWidth="0.7" /></S></MenuIcon>Solve
          </MenuItem>
          <MenuItem $h={25} $sep $tx={30}>
            <MenuIcon><S><path d="M1 9L9 2L14 6L6 13Z" fill="#c89a40" stroke="#a08030" strokeWidth="0.7" /><path d="M9 2L14 6L11.5 8L6.5 4Z" fill="#eed8a0" /></S></MenuIcon>Clear Generated Data
          </MenuItem>
          <MenuItem $h={25} $sep $tx={30}>
            <MenuIcon>
              <S w={16} h={14}>
                <text x="3.5" y="10" fontSize="9" textAnchor="middle" fill="#c89a20" fontFamily="Lato">a</text>
                <text x="12.5" y="10" fontSize="9" textAnchor="middle" fill="#c89a20" fontFamily="Lato">b</text>
                <path d="M6 1H10M8 1V13M6 13H10M1 11.5H15" fill="none" stroke="#666" strokeWidth="0.9" />
              </S>
            </MenuIcon>Rename<Shortcut>F2</Shortcut>
          </MenuItem>
          <MenuItem $h={25} $sep $tx={30}>
            <MenuIcon><FolderBase /></MenuIcon>Group All Similar Children
          </MenuItem>
          <MenuItem $h={25} $sep $tx={30}>
            <MenuIcon>
              <FolderBase><path d="M5 2C7 0 10 0 12 2" fill="none" stroke="#d02020" strokeWidth="1.2" /></FolderBase>
            </MenuIcon>Open Solver Files Directory
          </MenuItem>
        </Menu>
        <Menu $x={364} $y={297} $w={169}>
          {menu2.map((m) => (
            <MenuItem key={m.t} $h={m.h} $pt={m.pt} $pb={m.pb} $sep={m.sep} $on={m.on} $tx={30}>
              {m.icon ? <MenuIcon>{m.icon}</MenuIcon> : null}
              {m.t}
              {m.arrow ? <Arrow $on={m.on} /> : null}
            </MenuItem>
          ))}
        </Menu>
        <Menu $x={532} $y={298} $w={123}>
          <MenuItem $h={23} $on $tx={30}><MenuIcon $l={1}><RainbowCube sub="u" /></MenuIcon>Total</MenuItem>
          <MenuItem $h={22} $pb={1} $tx={30}><MenuIcon $l={1}><RainbowCube sub="u" /></MenuIcon>Directional</MenuItem>
        </Menu>
      </Frame>
    </>
  );
}
